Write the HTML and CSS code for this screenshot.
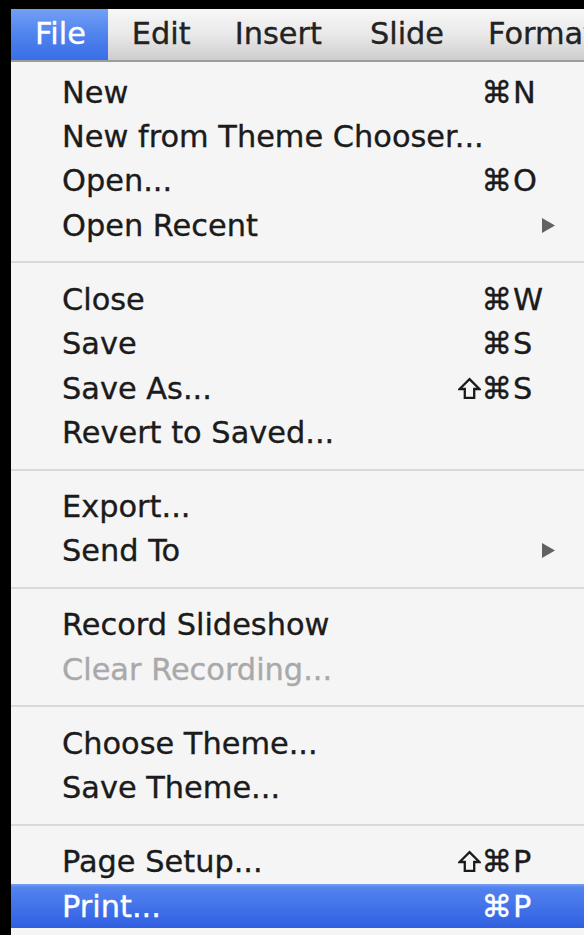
FILE: index.html
```html
<!DOCTYPE html>
<html lang="en">
<head>
<meta charset="utf-8">
<title>File menu</title>
<link rel="stylesheet" href="styles.css">
</head>
<body>
<div class="screen">
  <nav class="menubar">
    <span class="title is-open">File</span>
    <span class="title">Edit</span>
    <span class="title">Insert</span>
    <span class="title">Slide</span>
    <span class="title">Format</span>
  </nav>
  <div class="menu">
    <div class="group">
      <div class="item"><span>New</span><span class="key"><span class="mods">⌘</span><span class="letter">N</span></span></div>
      <div class="item"><span>New from Theme Chooser...</span></div>
      <div class="item"><span>Open...</span><span class="key"><span class="mods">⌘</span><span class="letter">O</span></span></div>
      <div class="item"><span>Open Recent</span><svg class="arrow" viewBox="0 0 13 15"><path d="M0 0 L13 7.5 L0 15 Z"/></svg></div>
    </div>
    <div class="sep"></div>
    <div class="group">
      <div class="item"><span>Close</span><span class="key"><span class="mods">⌘</span><span class="letter">W</span></span></div>
      <div class="item"><span>Save</span><span class="key"><span class="mods">⌘</span><span class="letter">S</span></span></div>
      <div class="item"><span>Save As...</span><span class="key"><span class="mods"><svg class="shift" viewBox="0 0 22 22"><path d="M11 2 L20.5 11.5 H15.5 V20 H6.5 V11.5 H1.5 Z"/></svg>⌘</span><span class="letter">S</span></span></div>
      <div class="item"><span>Revert to Saved...</span></div>
    </div>
    <div class="sep"></div>
    <div class="group">
      <div class="item"><span>Export...</span></div>
      <div class="item"><span>Send To</span><svg class="arrow" viewBox="0 0 13 15"><path d="M0 0 L13 7.5 L0 15 Z"/></svg></div>
    </div>
    <div class="sep"></div>
    <div class="group">
      <div class="item"><span>Record Slideshow</span></div>
      <div class="item is-disabled"><span>Clear Recording...</span></div>
    </div>
    <div class="sep"></div>
    <div class="group">
      <div class="item"><span>Choose Theme...</span></div>
      <div class="item"><span>Save Theme...</span></div>
    </div>
    <div class="sep"></div>
    <div class="group">
      <div class="item"><span>Page Setup...</span><span class="key"><span class="mods"><svg class="shift" viewBox="0 0 22 22"><path d="M11 2 L20.5 11.5 H15.5 V20 H6.5 V11.5 H1.5 Z"/></svg>⌘</span><span class="letter">P</span></span></div>
      <div class="item is-active"><span>Print...</span><span class="key"><span class="mods">⌘</span><span class="letter">P</span></span></div>
    </div>
  </div>
</div>
</body>
</html>
```

FILE: styles.css
```css
html, body {
  margin: 0;
  padding: 0;
  background: #000;
  overflow: hidden;
}

.screen {
  padding: 9px 0 0 11px;
  width: 573px;
  font-family: "DejaVu Sans", "Noto Sans", sans-serif;
  font-size: 30.4px;
  color: #1b1b1b;
  -webkit-text-stroke: 0.35px currentColor;
}

/* top menu bar */
.menubar {
  display: flex;
  height: 51px;
  align-items: stretch;
  overflow: hidden;
  background: linear-gradient(to bottom, #f7f7f7 0%, #e9e9e9 50%, #cdcdcd 100%);
  border-bottom: 2px solid #9c9c9c;
  white-space: nowrap;
}

.title {
  display: flex;
  align-items: center;
  padding: 0 20px 2px 24px;
  color: #222;
}

.title:nth-child(4) {
  padding-left: 28px;
}

.title.is-open {
  padding-right: 22px;
  color: #fff;
  background: linear-gradient(to bottom, #72a0f5 0%, #4f83ee 50%, #3a6ee6 100%);
}

/* dropdown panel */
.menu {
  background: #f5f5f5;
  padding: 8px 0 7px;
}

.item {
  display: flex;
  justify-content: space-between;
  align-items: center;
  height: 44.4px;
  padding: 0 29px 0 51px;
  white-space: nowrap;
}

.item.is-disabled {
  color: #a9a9a9;
}

.item.is-active {
  color: #fff;
  background: linear-gradient(to bottom, #79a0f3 0%, #5383ee 8%, #3f6fe7 60%, #2f5fe0 100%);
}

/* shortcut: modifier glyphs right-aligned, key letter in its own column */
.key {
  display: flex;
  align-items: center;
}

.mods {
  display: flex;
  align-items: center;
}

.shift {
  width: 23px;
  height: 23px;
  margin-right: 1px;
  fill: none;
  stroke: currentColor;
  stroke-width: 2.2;
  stroke-linejoin: miter;
}

.letter {
  width: 42px;
  padding-left: 1px;
}

.arrow {
  width: 13px;
  height: 15px;
  fill: #626262;
}

.sep {
  height: 2px;
  margin: 13.8px 0;
  background: #d9d9d9;
}
```
